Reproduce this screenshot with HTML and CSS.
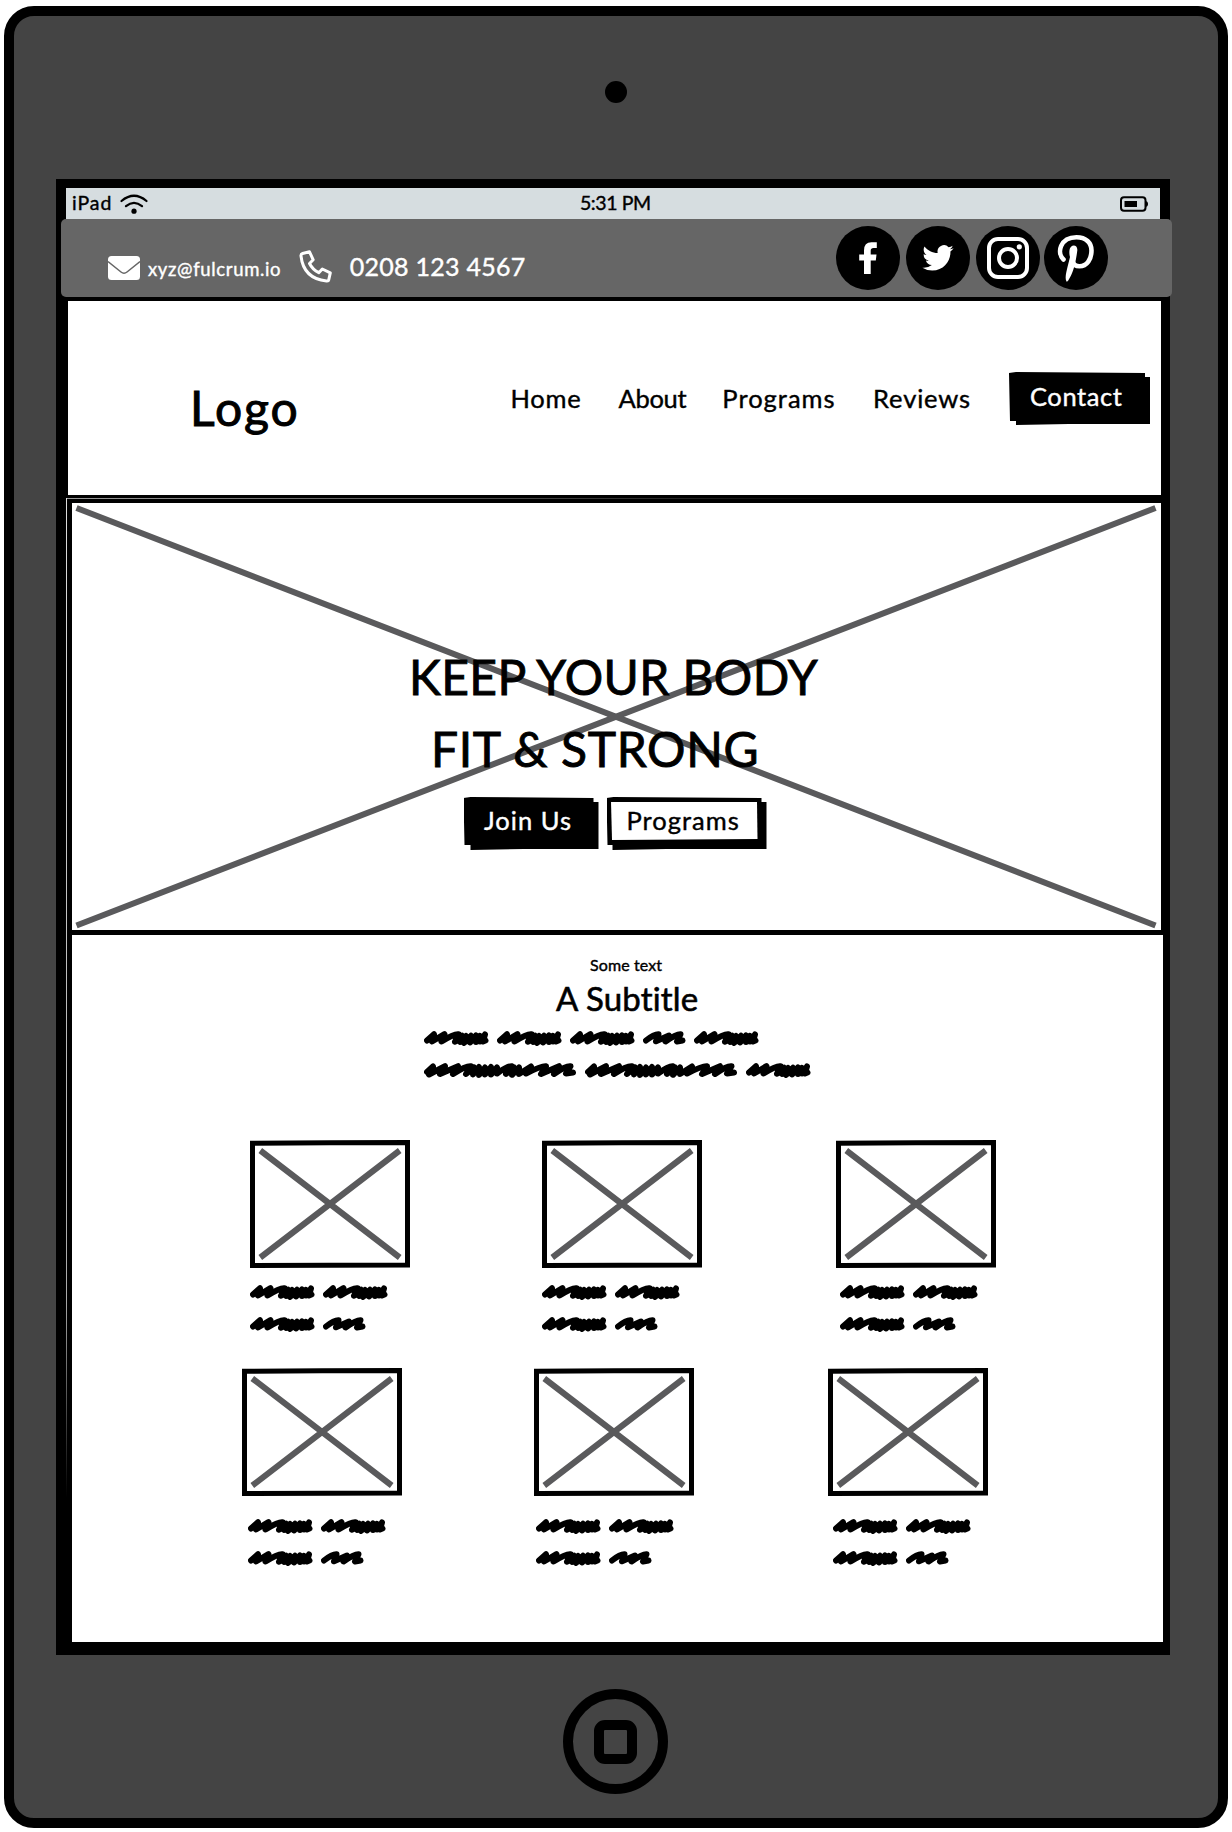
FILE: index.html
```html
<!DOCTYPE html>
<html lang="en">
<head>
<meta charset="utf-8">
<title>Fulcrum</title>
<link rel="stylesheet" href="styles.css">
</head>
<body>
<svg class="defs" width="0" height="0" aria-hidden="true">
  <symbol id="word" viewBox="0 0 65 15"><path d="M3 9.500 10 3.200 8 10.500 20.500 3.200 17.500 10.500Q30 2.500 34.500 3.200L31 10.800 38 4.800 36 11 42 5 40 12 47 4.800 46 11.500 52 4.500 52 11 56 5 56 10.500 61 3.500 59 10.500 61.500 9.500"/></symbol>
  <symbol id="short" viewBox="0 0 43 15"><path d="M3 9.500Q11 3 15.500 3.200L13 10.300 26 4.500 22.500 10.500Q33 3 37.500 3.200L34 10.500 39.500 9.500"/></symbol>
  <symbol id="long" viewBox="0 0 152 15"><path d="M3 9 9 3.500 5 11.500 21 3.200 16 11 34 3.200 29 11Q42 2.500 47 3.200L42 11 50 4.500 49 11.500 55 4 55 12 61 4.500 61 11.500 67 4 67 11.500 73 4.500 73 10.500Q84 2.500 88 3.200L82 10.800 90 4.500 88 11.800 95 4.500 95 11 107 3.500 102 10.500Q118 2.500 122 3.200L117 11 135 3.200 130 11Q142 2.500 146.500 3.200L142 10.500 149 9.500"/></symbol>
  <symbol id="placeholder" viewBox="0 0 160 128"><path d="M2.500 3.200 80 2.700 157.500 2.500V125L2.500 125.500Z" fill="#fff" stroke="#000" stroke-width="5"/><path d="M10.300 10.500 149.700 117.500M149.700 10.500 10.300 117.500" stroke="#5a5a5c" stroke-width="6"/></symbol>
</svg>
<div class="device">
  <div class="camera"></div>
  <div class="screen">
    <div class="status">
      <span class="carrier">iPad</span>
      <svg class="wifi" viewBox="0 0 28 20"><path d="M1.500 7Q14-3.500 26.500 7M6 12.200Q14 5.500 22 12.200" fill="none" stroke="#000" stroke-width="2.200" stroke-linecap="round"/><circle cx="14" cy="17.200" r="2.600"/></svg>
      <span class="clock">5:31 PM</span>
      <svg class="battery" viewBox="0 0 28 16"><rect x="1" y="1.200" width="24.500" height="13.600" rx="3" fill="none" stroke="#000" stroke-width="2"/><rect x="4.500" y="5" width="12.500" height="6"/><path d="M25 5q3 0 3 3t-3 3z"/></svg>
    </div>
    <div class="topbar">
      <div class="reach">
        <svg class="mail" viewBox="0 0 32 24"><rect width="32" height="24" rx="3.500" fill="#fff"/><path d="M0 5.500 13 16Q16 18.500 19 16L32 5.500" fill="none" stroke="#666" stroke-width="1.500"/></svg>
        <span class="email">xyz@fulcrum.io</span>
        <svg class="phone" viewBox="0 0 33 33"><path d="M3.500 3.500 10.500 1.800 14.200 9.800 10.500 13.500Q13.500 19.500 19.800 22.700L23.300 19 31.300 22.800 29.700 30Q29.500 31.200 27.500 31 4.500 28.500 2 6 1.800 4 3.500 3.500Z" fill="none" stroke="#fff" stroke-width="3" stroke-linejoin="round"/></svg>
        <span class="tel">0208 123 4567</span>
      </div>
      <div class="social">
        <svg viewBox="0 0 64 64"><circle cx="32" cy="32" r="32"/><path fill="#fff" d="M28 48V34.500H23.200V28.500H28V24.500Q28 16.300 35.500 16.300H40.800V22H37.500Q34.700 22 34.700 24.800V28.500H40.500L39.800 34.500H34.700V48Z"/></svg>
        <svg viewBox="0 0 64 64"><circle cx="32" cy="32" r="32"/><path fill="#fff" transform="translate(16.400 16.300) scale(1.300)" d="M23.953 4.570a10 10 0 01-2.825.775 4.958 4.958 0 002.163-2.723c-.951.555-2.005.959-3.127 1.184a4.920 4.920 0 00-8.384 4.482C7.690 8.095 4.067 6.130 1.640 3.162a4.822 4.822 0 00-.666 2.475c0 1.710.870 3.213 2.188 4.096a4.904 4.904 0 01-2.228-.616v.060a4.923 4.923 0 003.946 4.827 4.996 4.996 0 01-2.212.085 4.936 4.936 0 004.604 3.417 9.867 9.867 0 01-6.102 2.105c-.390 0-.779-.023-1.170-.067a13.995 13.995 0 007.557 2.209c9.053 0 13.998-7.496 13.998-13.985 0-.210 0-.420-.015-.630A9.935 9.935 0 0024 4.590z"/></svg>
        <svg viewBox="0 0 64 64"><circle cx="32" cy="32" r="32"/><g fill="none" stroke="#fff" stroke-width="4"><rect x="13" y="13" width="38" height="38" rx="9"/><circle cx="32" cy="32" r="9"/></g><circle cx="43.300" cy="20.800" r="2.600" fill="#fff"/></svg>
        <svg viewBox="0 0 64 64"><circle cx="32" cy="32" r="32"/><path fill="none" stroke="#fff" stroke-width="4.600" stroke-linecap="round" d="M19.500 33.500C12.500 27 16 11.200 32.500 11.200C42 11.200 47.500 17 47.500 24.500C47.500 33 43 40.300 35.500 40.300C32 40.300 29.500 38.500 29 36"/><path fill="#fff" d="M25.500 24C26 18 34 17.500 33.300 24.500C32.500 31 30.500 43 27 49.500C25.500 52.500 23.500 56.500 22.500 55.500C20.500 52 22.500 45.500 23.500 41L26 31Q25 28 25.500 24Z"/></svg>
      </div>
    </div>
    <div class="nav">
      <span class="logo">Logo</span>
      <span class="link home">Home</span>
      <span class="link about">About</span>
      <span class="link programs">Programs</span>
      <span class="link reviews">Reviews</span>
      <span class="btn contact">Contact</span>
    </div>
    <div class="hero">
      <svg class="hero-cross" viewBox="0 0 1089 427"><path d="M4.500 5 1083.500 422.500M1083.500 5 4.500 422.500"/></svg>
      <h1>
        <span class="line1">KEEP YOUR BODY</span>
        <span class="line2">FIT &amp; STRONG</span>
      </h1>
      <div class="actions">
        <span class="btn join">Join Us</span>
        <span class="btn more"><span>Programs</span></span>
      </div>
    </div>
    <div class="content">
      <p class="eyebrow">Some text</p>
      <h2>A Subtitle</h2>
      <div class="scribble intro">
        <div class="row"><svg class="w"><use href="#word"/></svg><svg class="w"><use href="#word"/></svg><svg class="w"><use href="#word"/></svg><svg class="s"><use href="#short"/></svg><svg class="w"><use href="#word"/></svg></div>
        <div class="row"><svg class="l"><use href="#long"/></svg><svg class="l"><use href="#long"/></svg><svg class="w"><use href="#word"/></svg></div>
      </div>
      <div class="cards first">
        <div class="card"><svg class="pic"><use href="#placeholder"/></svg><div class="scribble"><div class="row"><svg class="w"><use href="#word"/></svg><svg class="w"><use href="#word"/></svg></div><div class="row"><svg class="w"><use href="#word"/></svg><svg class="s"><use href="#short"/></svg></div></div></div>
        <div class="card"><svg class="pic"><use href="#placeholder"/></svg><div class="scribble"><div class="row"><svg class="w"><use href="#word"/></svg><svg class="w"><use href="#word"/></svg></div><div class="row"><svg class="w"><use href="#word"/></svg><svg class="s"><use href="#short"/></svg></div></div></div>
        <div class="card"><svg class="pic"><use href="#placeholder"/></svg><div class="scribble"><div class="row"><svg class="w"><use href="#word"/></svg><svg class="w"><use href="#word"/></svg></div><div class="row"><svg class="w"><use href="#word"/></svg><svg class="s"><use href="#short"/></svg></div></div></div>
      </div>
      <div class="cards second">
        <div class="card"><svg class="pic"><use href="#placeholder"/></svg><div class="scribble"><div class="row"><svg class="w"><use href="#word"/></svg><svg class="w"><use href="#word"/></svg></div><div class="row"><svg class="w"><use href="#word"/></svg><svg class="s"><use href="#short"/></svg></div></div></div>
        <div class="card"><svg class="pic"><use href="#placeholder"/></svg><div class="scribble"><div class="row"><svg class="w"><use href="#word"/></svg><svg class="w"><use href="#word"/></svg></div><div class="row"><svg class="w"><use href="#word"/></svg><svg class="s"><use href="#short"/></svg></div></div></div>
        <div class="card"><svg class="pic"><use href="#placeholder"/></svg><div class="scribble"><div class="row"><svg class="w"><use href="#word"/></svg><svg class="w"><use href="#word"/></svg></div><div class="row"><svg class="w"><use href="#word"/></svg><svg class="s"><use href="#short"/></svg></div></div></div>
      </div>
    </div>
  </div>
  <div class="home-button"><div class="home-square"></div></div>
</div>
</body>
</html>
```
FILE: styles.css
```css
* { box-sizing: border-box; }
body { margin: 0; background: #fff; font-family: Lato, "Open Sans", sans-serif; font-variant-ligatures: none; color: #000; white-space: nowrap; -webkit-text-stroke: 0.4px; }
svg { display: block; flex: none; }
.defs { position: absolute; }

.device { display: flex; flex-direction: column; align-items: center; width: 1224px; height: 1822px; margin: 6px 4px; border: 10px solid #000; border-radius: 30px; background: #444; }
.camera { flex: none; width: 22px; height: 22px; margin-top: 65px; border-radius: 50%; background: #000; }
.screen { flex: none; align-self: flex-start; width: 1114px; height: 1476px; margin: 76px 0 0 42px; padding: 9px 0 0 10px; background: #000; }

.status { display: flex; align-items: center; width: 1094px; height: 32px; padding: 0 12px 3px 6px; background: #d6dde0; font-size: 19.500px; }
.carrier { letter-spacing: 0.960px; }
.wifi { width: 28px; height: 20px; margin: 2px 0 0 8px; }
.clock { margin-left: 431.500px; letter-spacing: -0.400px; }
.battery { width: 28px; height: 16px; margin: 2px 0 0 auto; }

.topbar { display: flex; justify-content: space-between; position: relative; width: 1111px; height: 78px; margin: -1px 0 0 -5px; padding: 7px 64px 0 47px; border-radius: 5px; background: #666; color: #fff; }
.reach { display: flex; align-items: center; height: 82px; }
.mail { width: 32px; height: 24px; margin-top: 2px; }
.email { margin: 3px 0 0 8px; font-size: 18.500px; letter-spacing: 0.650px; }
.phone { width: 33px; height: 33px; margin: -2px 0 0 18px; }
.tel { margin: -3px 0 0 17.500px; font-size: 25px; letter-spacing: 0.260px; }
.social { display: flex; gap: 6px; }
.social svg { width: 64px; height: 64px; }
.social svg:last-child { margin-left: -2px; }

.nav { display: flex; align-items: center; width: 1093px; height: 194px; margin: 4px 0 0 2px; background: #fff; font-size: 25.500px; }
.logo { width: 112px; margin: 18px 0 0 122px; font-size: 48px; letter-spacing: 2px; -webkit-text-stroke: 1px; }
.home { margin-left: 208.500px; letter-spacing: 0.750px; }
.about { margin-left: 37px; letter-spacing: -0.290px; }
.programs { margin-left: 36px; letter-spacing: 1px; }
.reviews { margin-left: 37.500px; letter-spacing: 0.850px; }

.btn { display: block; height: 53px; background: #000; color: #fff; font-size: 25.500px; line-height: 30px; }
.contact { width: 141px; margin: 1px 0 0 38px; padding: 9px 0 0 21px; letter-spacing: 0.600px; clip-path: polygon(0 1px, 7px 0, 136px 1px, 136px 5px, 141px 5px, 141px 52px, 60px 52px, 7px 53px, 7px 49px, 1px 49px); }

.hero { position: relative; width: 1089px; height: 427px; margin: 8px 0 0 6px; background: #fff; }
.hero::before { content: ""; position: absolute; top: -5px; left: -5px; width: 780px; height: 1px; background: linear-gradient(90deg, #999, #444 60%, #000); }
.hero::after { content: ""; position: absolute; top: -5px; left: -6px; width: 1px; height: 1000px; background: linear-gradient(#ddd, #aaa 80%, #000); }
.hero-cross { position: absolute; inset: 0; stroke: #5a5a5c; stroke-width: 6; }
h1 { position: relative; height: 294px; margin: 0; padding: 138px 0 0 337px; font-size: 48px; font-weight: 400; line-height: 71.500px; -webkit-text-stroke: 0.900px; }
h1 span { display: block; }
.line1 { letter-spacing: 0.400px; }
.line2 { padding-left: 22px; letter-spacing: 0.640px; }
.actions { position: relative; display: flex; gap: 8px; padding-left: 391.500px; }
.join { width: 135px; padding: 8px 0 0 20.500px; letter-spacing: 1.030px; clip-path: polygon(0 1px, 7px 0, 130px 1px, 130px 5px, 135px 5px, 135px 52px, 60px 52px, 7px 53px, 7px 48px, 1px 48px); }
.more { width: 160px; padding: 4.500px 0 0 4.500px; clip-path: polygon(0 1px, 7px 0, 155px 1px, 155px 5px, 160px 5px, 160px 52px, 60px 52px, 6px 53px, 6px 48px, 1px 48px); }
.more span { display: block; width: 146.500px; height: 38.500px; padding: 3.500px 0 0 15.500px; background: #fff; color: #000; letter-spacing: 1px; clip-path: polygon(0 0, 146px .5px, 146.500px 37.500px, 1px 38.500px); }

.content { width: 1091px; height: 707px; margin: 5px 0 0 6px; padding-top: 20px; background: #fff; }
.eyebrow { margin: 0 0 0 518px; font-size: 16px; line-height: 19px; letter-spacing: 0.100px; }
h2 { margin: 4px 0 0 484px; font-size: 33px; font-weight: 400; line-height: 40px; letter-spacing: 0.150px; -webkit-text-stroke: 0.600px; }

.scribble { fill: none; stroke: #000; stroke-width: 6; stroke-linecap: round; stroke-linejoin: round; }
.intro { height: 108px; padding: 13px 0 0 352px; }
.row { display: flex; gap: 8px; height: 15px; margin-bottom: 17px; }
.w { width: 65px; height: 15px; }
.s { width: 43px; height: 15px; }
.l { width: 152px; height: 15px; }
.l + .l, .l + .w { margin-left: 1px; }

.cards { display: grid; grid-template-columns: 292px 294px 200px; height: 228px; padding-left: 178px; }
.first { margin-top: 14px; }
.second { padding-left: 170px; }
.pic { width: 160px; height: 128px; }
.card .scribble { margin-top: 17px; }
.first .card:nth-child(3) .scribble { margin-left: 4px; }
.second .card .scribble { margin: 23px 0 0 6px; }
.second .card:nth-child(2) .scribble { margin-left: 2px; }
.second .card:nth-child(3) .scribble { margin-left: 5px; }

.home-button { display: grid; place-items: center; flex: none; width: 105px; height: 105px; margin: 34px 1px 0 0; border: 10px solid #000; border-radius: 50%; }
.home-square { width: 43px; height: 44px; border: 10px solid #000; border-radius: 11px; }
```
